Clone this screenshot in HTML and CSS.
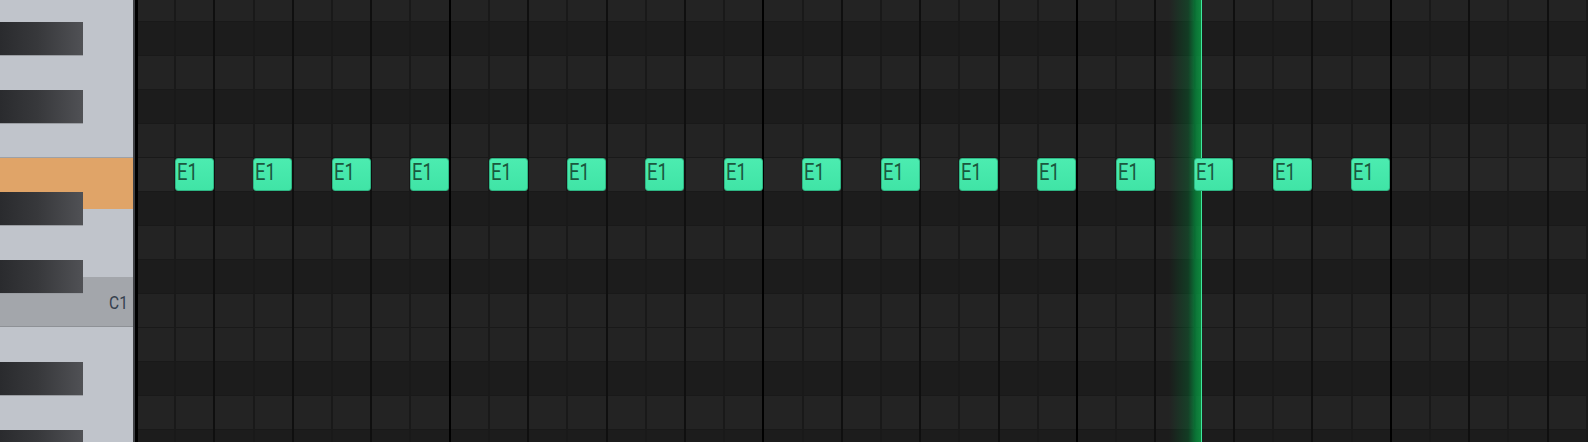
FILE: index.html
```html
<!DOCTYPE html>
<html lang="en">
<head>
  <meta charset="UTF-8">
  <title>Piano Roll</title>
  <link rel="stylesheet" href="styles.css">
</head>
<body>
  <div class="roll">
    <div class="piano">
      <div class="white-key key-top"></div>
      <div class="white-key key-tall"></div>
      <div class="white-key key-short"></div>
      <div class="white-key key-short seam active"></div>
      <div class="white-key key-tall"></div>
      <div class="white-key key-short octave"><span class="key-label">C1</span></div>
      <div class="white-key key-short seam"></div>
      <div class="white-key key-tall"></div>

      <!-- black keys sit over the white ones, top = row * 34 - 12 -->
      <div class="black-key" style="top: 22px"></div>
      <div class="black-key" style="top: 90px"></div>
      <div class="black-key" style="top: 192px"></div>
      <div class="black-key" style="top: 260px"></div>
      <div class="black-key" style="top: 362px"></div>
      <div class="black-key" style="top: 430px"></div>
    </div>

    <div class="grid">
      <div class="rows">
        <div class="row"></div>
        <div class="row sharp"></div>
        <div class="row"></div>
        <div class="row sharp"></div>
        <div class="row"></div>
        <div class="row current">
          <div class="note"><span>E1</span></div>
          <div class="note"><span>E1</span></div>
          <div class="note"><span>E1</span></div>
          <div class="note"><span>E1</span></div>
          <div class="note"><span>E1</span></div>
          <div class="note"><span>E1</span></div>
          <div class="note"><span>E1</span></div>
          <div class="note"><span>E1</span></div>
          <div class="note"><span>E1</span></div>
          <div class="note"><span>E1</span></div>
          <div class="note"><span>E1</span></div>
          <div class="note"><span>E1</span></div>
          <div class="note"><span>E1</span></div>
          <div class="note"><span>E1</span></div>
          <div class="note"><span>E1</span></div>
          <div class="note"><span>E1</span></div>
        </div>
        <div class="row sharp"></div>
        <div class="row"></div>
        <div class="row sharp"></div>
        <div class="row"></div>
        <div class="row"></div>
        <div class="row sharp"></div>
        <div class="row"></div>
        <div class="row sharp"></div>
      </div>

      <div class="playhead"></div>
    </div>
  </div>
</body>
</html>
```

FILE: styles.css
```css
body {
  margin: 0;
  font-family: Roboto, 'Liberation Sans', sans-serif;
  background: #1c1c1c;
  overflow: hidden;
}

.roll {
  display: flex;
  height: 442px;
  overflow: hidden;
}

/* keyboard */

.piano {
  position: relative;
  width: 133px;
  flex-shrink: 0;
  display: flex;
  flex-direction: column;
  background: #c0c4cb;
  border-right: 2px solid #3e4044;
}

.white-key {
  flex-shrink: 0;
  box-sizing: border-box;
  background: #c0c4cb;
}

.key-top {
  height: 38px;
}

.key-tall {
  height: 68px;
}

.key-short {
  height: 51px;
}

.seam {
  border-top: 1px solid #9da1a7;
}

.active {
  height: 52px;
  background: #e0a468;
}

.octave {
  height: 50px;
  background: #a3a6ab;
  border-bottom: 1px solid #8e9196;
  display: flex;
  align-items: center;
  justify-content: flex-end;
  padding-right: 5px;
}

.octave + .seam {
  border-top: none;
  height: 50px;
}

.key-label {
  display: inline-block;
  font-size: 18px;
  color: #36404e;
  transform: scaleX(0.86);
  transform-origin: right center;
  margin-top: 1px;
}

.black-key {
  position: absolute;
  left: 0;
  width: 83px;
  height: 33px;
  background: linear-gradient(to right, #2a2b2e, #37383b 45%, #505155);
  border-bottom: 1px solid #9a9da2;
}

/* note grid */

.grid {
  position: relative;
  flex: 1;
  overflow: hidden;
  border-left: 3px solid #000;
}

.grid::after {
  content: "";
  position: absolute;
  top: 0;
  bottom: 0;
  left: -3px;
  right: 0;
  z-index: 1;
  pointer-events: none;
  background:
    repeating-linear-gradient(to right, #000 0 2px, transparent 2px 313.68px),
    repeating-linear-gradient(to right, #0f0f0f 0 2px, transparent 2px 78.42px),
    repeating-linear-gradient(to right, #191919 0 2px, transparent 2px 39.21px);
}

.rows {
  margin-top: -13px;
}

.row {
  display: flex;
  height: 34px;
  box-sizing: border-box;
  border-top: 1px solid #191919;
  background: #232323;
}

.sharp {
  background: #1c1c1c;
}

.current {
  background: #262626;
  padding-left: 37px;
  gap: 39.42px;
}

.note {
  position: relative;
  z-index: 3;
  flex-shrink: 0;
  width: 39px;
  height: 33px;
  box-sizing: border-box;
  background: linear-gradient(#4cecb0, #40e4a6);
  border: 1px solid #2eb583;
  border-radius: 3px;
  color: #1b573e;
  font-size: 23px;
  font-weight: 400;
  line-height: 27px;
  padding-left: 1px;
  overflow: hidden;
}

.note span {
  display: inline-block;
  transform: scaleX(0.8);
  transform-origin: left center;
}

.playhead {
  position: absolute;
  top: 0;
  bottom: 0;
  left: 1031px;
  width: 33px;
  z-index: 2;
  box-sizing: border-box;
  border-right: 1px solid #3de89f;
  background: linear-gradient(to right, rgba(0, 120, 50, 0), rgba(0, 120, 50, 0.35) 60%, rgba(4, 150, 64, 0.7) 82%, rgba(10, 170, 72, 0.75));
}
```
